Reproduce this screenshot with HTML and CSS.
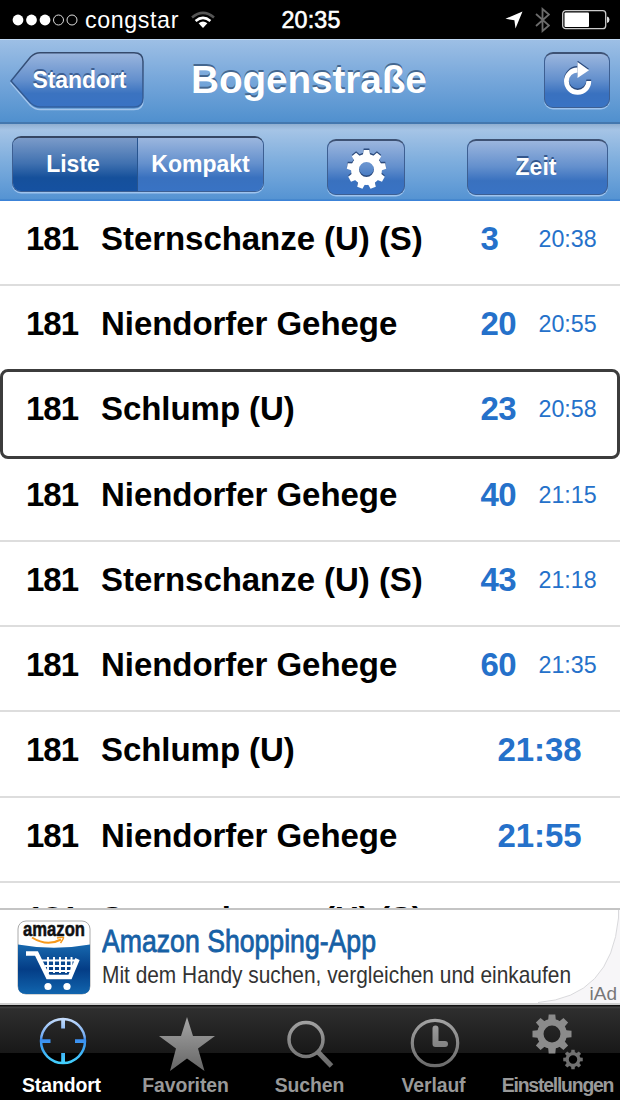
FILE: index.html
```
<!DOCTYPE html>
<html lang="de">
<head>
<meta charset="utf-8">
<title>Bogenstraße</title>
<link rel="stylesheet" href="styles.css">
</head>
<body>
<div class="phone">
  <header class="status">
    <div class="carrier">
      <svg width="68" height="14" viewBox="0 0 68 14"><g fill="#fff"><circle cx="6" cy="7" r="5.4"/><circle cx="19.5" cy="7" r="5.4"/><circle cx="33" cy="7" r="5.4"/></g><g fill="none" stroke="#ddd" stroke-width="1"><circle cx="46.5" cy="7" r="5"/><circle cx="60" cy="7" r="5"/></g></svg>
      <span class="carrier-name">congstar</span>
      <svg class="wifi" width="24" height="18" viewBox="0 0 24 18" fill="none" stroke-width="2.6"><path d="M1 6.4Q12-2.8 23 6.4" stroke="#555"/><path d="M4.6 10Q12 3.8 19.4 10" stroke="#fff"/><path d="M7.6 12.2Q12 9 16.4 12.2L12 17z" fill="#fff"/></svg>
    </div>
    <span class="clock">20:35</span>
    <div class="indicators">
      <svg width="18" height="18" viewBox="0 0 18 18"><path d="M17.5.5 10.5 17.5 9.4 9.2 .5 7.8z" fill="#fff"/></svg>
      <svg width="15" height="26" viewBox="0 0 15 26" fill="none" stroke="#6c6c6c" stroke-width="1.8"><path d="M1 7 14 18.500 7.500 24V2L14 7.500 1 19"/></svg>
      <svg width="48" height="20" viewBox="0 0 48 20"><rect x=".7" y=".7" width="43" height="18" rx="3" fill="none" stroke="#ccc" stroke-width="1.300"/><rect x="2.500" y="2.500" width="24.500" height="14.500" rx="1" fill="#fff"/><path d="M45 6.500q2.500.5 2.500 3.200T45 13z" fill="#ddd"/></svg>
    </div>
  </header>

  <nav class="navbar">
    <button class="back">
      <svg width="137" height="60" viewBox="0 0 137 60">
        <defs><linearGradient id="btn" x2="0" y2="1"><stop offset="0" stop-color="#9bb6de"/><stop offset=".5" stop-color="#6490cd"/><stop offset=".75" stop-color="#3b73c0"/><stop offset="1" stop-color="#3973c4"/></linearGradient>
        <linearGradient id="edge" x2="0" y2="1"><stop offset="0" stop-color="#354a6c"/><stop offset="1" stop-color="#315f9f"/></linearGradient></defs>
        <path d="M1 29.500 20.500 6Q25 1.500 30 1.500H124Q133 1.500 133 10.500V47Q133 56 124 56H30Q25 56 20.500 52z" transform="translate(0 1.500)" fill="none" stroke="#a3c5ec" stroke-width="1.500"/>
        <path d="M1 29 20.500 5Q25 .800 30 .800H124Q133 .800 133 9.500V46Q133 55 124 55H30Q25 55 20.500 51z" fill="url(#btn)" stroke="url(#edge)" stroke-width="1.500"/>
      </svg>
      <span class="back-label">Standort</span>
    </button>
    <h1 class="title">Bogenstraße</h1>
    <button class="btn refresh">
      <svg class="reload" width="32" height="36" viewBox="0 0 32 36"><path d="M26.800 20A11.200 11.200 0 1 1 15.500 9" fill="none" stroke="#2b4a7c" stroke-width="4.800" transform="translate(0 -1.500)"/><path d="M15.500 1 27 9.300 15.500 17z" fill="#2b4a7c" transform="translate(0 -1.500)"/><path d="M26.800 20A11.200 11.200 0 1 1 15.500 9" fill="none" stroke="#fff" stroke-width="4.800"/><path d="M15.500 1 27 9.300 15.500 17z" fill="#fff"/></svg>
    </button>
  </nav>

  <div class="toolbar">
    <div class="segmented"><button class="segment active">Liste</button><button class="segment">Kompakt</button></div>
    <button class="btn gear">
      <svg width="42" height="42" viewBox="-21.500 -22.500 42 42">
        <defs><path id="tooth" d="M-4-12-2.800-19.500H2.800L4-12z"/>
        <g id="cog"><circle r="11.500" fill="none" stroke="currentColor" stroke-width="8"/><g fill="currentColor"><use href="#tooth"/><use href="#tooth" transform="rotate(40)"/><use href="#tooth" transform="rotate(80)"/><use href="#tooth" transform="rotate(120)"/><use href="#tooth" transform="rotate(160)"/><use href="#tooth" transform="rotate(200)"/><use href="#tooth" transform="rotate(240)"/><use href="#tooth" transform="rotate(280)"/><use href="#tooth" transform="rotate(320)"/></g></g></defs>
        <use href="#cog" y="-1.500" color="#2b4a7c"/><use href="#cog" color="#fff"/>
      </svg>
    </button>
    <button class="btn time-btn">Zeit</button>
  </div>

  <main class="list">
    <div class="row"><span class="line">181</span><span class="dest">Sternschanze (U) (S)</span><span class="mins">3</span><span class="time">20:38</span></div>
    <div class="row"><span class="line">181</span><span class="dest">Niendorfer Gehege</span><span class="mins">20</span><span class="time">20:55</span></div>
    <div class="row selected"><span class="line">181</span><span class="dest">Schlump (U)</span><span class="mins">23</span><span class="time">20:58</span></div>
    <div class="row"><span class="line">181</span><span class="dest">Niendorfer Gehege</span><span class="mins">40</span><span class="time">21:15</span></div>
    <div class="row"><span class="line">181</span><span class="dest">Sternschanze (U) (S)</span><span class="mins">43</span><span class="time">21:18</span></div>
    <div class="row"><span class="line">181</span><span class="dest">Niendorfer Gehege</span><span class="mins">60</span><span class="time">21:35</span></div>
    <div class="row"><span class="line">181</span><span class="dest">Schlump (U)</span><span class="late">21:38</span></div>
    <div class="row"><span class="line">181</span><span class="dest">Niendorfer Gehege</span><span class="late">21:55</span></div>
    <div class="row partial"><span class="line">181</span><span class="dest">Sternschanze (U) (S)</span></div>
  </main>

  <aside class="ad">
    <svg class="app-icon" width="74" height="75" viewBox="0 0 74 75">
      <defs><linearGradient id="az" x2="0" y2="1"><stop offset="0" stop-color="#1768ae"/><stop offset=".5" stop-color="#043d86"/><stop offset="1" stop-color="#1165ae"/></linearGradient></defs>
      <rect x="1" y="1" width="72" height="73" rx="8" fill="#fff" stroke="#aaa"/>
      <path d="M1 24.500Q37 31 73 24.500V66Q73 74 65 74H9Q1 74 1 66z" fill="url(#az)"/>
      <text class="az-word" x="6" y="16" textLength="62" lengthAdjust="spacingAndGlyphs">amazon</text>
      <path d="M15 17.500Q30 27 44 19.500" fill="none" stroke="#f79a1c" stroke-width="2"/><path d="M40 18Q47 16.500 46.500 18T43.500 23" fill="none" stroke="#f79a1c" stroke-width="1.500"/>
      <path d="M9 33.500H19.500L31 57H53L60.500 39" fill="none" stroke="#fff" stroke-width="4.600"/>
      <path d="M25 40.500H58M28 46H56M30 51H54M31 37V53M37 37V53M43 37V53M49 37V53M54.500 37V50" stroke="#fff" stroke-width="1.900"/>
      <circle cx="31" cy="66.500" r="3.600" fill="#fff"/><circle cx="50" cy="66.500" r="3.600" fill="#fff"/>
    </svg>
    <svg class="ad-copy" width="474" height="80" viewBox="0 0 474 80">
      <text class="ad-title" x="0" y="39.500" textLength="274" lengthAdjust="spacingAndGlyphs">Amazon Shopping-App</text>
      <text class="ad-sub" x="0" y="71" textLength="469" lengthAdjust="spacingAndGlyphs">Mit dem Handy suchen, vergleichen und einkaufen</text>
    </svg>
    <div class="ad-corner"><svg width="90" height="93" viewBox="0 0 90 93"><path d="M88.500 0V8Q81 87 8 92.500V93H90V0z" fill="#f7f6f8"/><path d="M88.500 0V8Q81 87 8 92.500" fill="none" stroke="#d9d9dc"/></svg><span class="iad">iAd</span></div>
  </aside>

  <footer class="tabs">
    <svg width="0" height="0" class="defs"><defs>
      <linearGradient id="blue" gradientUnits="userSpaceOnUse" x1="0" y1="2" x2="0" y2="50"><stop offset="0" stop-color="#d9e8fc"/><stop offset=".48" stop-color="#6fa9f4"/><stop offset=".52" stop-color="#3b8cf0"/><stop offset="1" stop-color="#42cdfc"/></linearGradient>
      <linearGradient id="grey" gradientUnits="userSpaceOnUse" x1="0" y1="2" x2="0" y2="54"><stop offset="0" stop-color="#aaa"/><stop offset="1" stop-color="#6b6b6b"/></linearGradient>
    </defs></svg>
    <a class="tab current"><svg width="60" height="60" viewBox="0 0 60 60"><circle cx="31" cy="29" r="22" fill="none" stroke="url(#blue)" stroke-width="2.500"/><path fill="url(#blue)" d="M29.200 7h3.800v9.500h-3.800zM29.200 41h3.800v10h-3.800zM9 27.300h9.500V31H9zM43 27.300h10V31H43z"/></svg><span>Standort</span></a>
    <a class="tab"><svg width="60" height="60" viewBox="0 0 60 60"><path d="M31 5 37 24H59L42 36.500 48.500 59 31 46.500 14 59 20 36.500 3 24H25z" fill="url(#grey)"/></svg><span>Favoriten</span></a>
    <a class="tab"><svg width="60" height="60" viewBox="0 0 60 60" fill="none" stroke="url(#grey)"><circle cx="26" cy="27.500" r="17" stroke-width="3.500"/><path d="M37.500 39.500 51.500 54" stroke-width="5"/></svg><span>Suchen</span></a>
    <a class="tab"><svg width="60" height="60" viewBox="0 0 60 60" fill="none" stroke="url(#grey)"><circle cx="31" cy="31" r="22.700" stroke-width="3.200"/><path d="M31.500 16.500V32H41" stroke-width="6" stroke-linecap="round" stroke-linejoin="round"/></svg><span>Verlauf</span></a>
    <a class="tab settings"><svg width="60" height="60" viewBox="0 0 60 60">
      <defs><path id="t8" d="M-4-12-3.300-19.500H3.300L4-12z"/><g id="cog8"><circle r="11.700" fill="none" stroke="currentColor" stroke-width="6.500"/><g fill="currentColor"><use href="#t8"/><use href="#t8" transform="rotate(45)"/><use href="#t8" transform="rotate(90)"/><use href="#t8" transform="rotate(135)"/><use href="#t8" transform="rotate(180)"/><use href="#t8" transform="rotate(225)"/><use href="#t8" transform="rotate(270)"/><use href="#t8" transform="rotate(315)"/></g></g></defs>
      <use href="#cog8" transform="translate(24 22)" color="#8b8b8b"/><use href="#cog8" transform="translate(45 47.500) scale(.5)" color="#707070"/></svg><span>Einstellungen</span></a>
  </footer>
</div>
</body>
</html>
```
FILE: styles.css
```
* { box-sizing: border-box; }
body { margin: 0; background: #000; font-family: "Liberation Sans", Arial, sans-serif; }
button { border: 0; margin: 0; padding: 0; background: none; font: inherit; color: inherit; }
svg { display: block; flex: none; }
.phone { width: 620px; height: 1100px; display: flex; flex-direction: column; overflow: hidden; }

.status { height: 39px; flex: none; display: grid; grid-template-columns: 1fr auto 1fr; align-items: center; padding: 1px 10px 0 12px; background: #000; color: #fff; font-size: 23.25px; }
.carrier { display: flex; align-items: center; }
.carrier-name { margin-left: 5px; letter-spacing: .6px; }
.wifi { margin-left: 12px; }
.clock { -webkit-text-stroke: .6px #fff; letter-spacing: .2px; }
.indicators { display: flex; justify-content: flex-end; align-items: center; gap: 12px; }

.navbar { height: 85px; flex: none; display: flex; align-items: flex-start; padding: 12px 10px 0; background: linear-gradient(#9dbfe5, #75a6da 50%, #5090ce); border-top: 1px solid #c0d8f2; border-bottom: 2px solid #4377ae; color: #fff; font-weight: bold; }
.back { display: grid; width: 137px; height: 60px; font-size: 23px; text-align: left; }
.back svg, .back-label { grid-area: 1 / 1; }
.back-label { padding: 15px 0 0 22.500px; letter-spacing: -.1px; text-shadow: 0 -2px 0 #3d5f92; }
.title { margin: 6px 0 0 44px; width: 240px; font-size: 38.75px; line-height: 44px; letter-spacing: -.1px; text-shadow: 0 -2px 0 #44678f; white-space: nowrap; }
.btn { display: flex; align-items: center; justify-content: center; height: 56px; border: 1.500px solid #3d5f92; border-top: 2px solid #3e5274; border-radius: 9px; background: linear-gradient(#9bb6de, #6490cd 48%, #3971bf 75%, #3973c4); box-shadow: 0 1.500px 0 #9fc4ee; color: #fff; font-weight: bold; font-size: 23px; text-shadow: 0 -2px 0 #34578d; }
.refresh { width: 66px; margin-left: auto; }
.reload { margin: -3px 0 0 2px; }

.toolbar { height: 77px; flex: none; display: flex; align-items: flex-start; padding: 12px 12px 0; background: linear-gradient(#8faed0, #a5c4e6 6px, #7daddd 50%, #5694d3 98%, #3f82cb); border-bottom: 1px solid #3c83d8; }
.segmented { display: flex; width: 252px; height: 56px; border: 1.500px solid #3d5f92; border-top: 2px solid #354663; border-radius: 9px; overflow: hidden; box-shadow: 0 1.500px 0 #9fc4ee; color: #fff; font-weight: bold; font-size: 23px; text-shadow: 0 -2px 0 #34578d; }
.segment { flex: 1; padding-bottom: 1px; background: linear-gradient(#9bb6de, #6490cd 48%, #3971bf 75%, #3973c4); }
.active { flex: none; width: 125px; padding-right: 4px; border-right: 1px solid #27548f; background: linear-gradient(#7b9bc9, #4071b0 48%, #15509b 75%, #1551a1); }
.gear { width: 78px; margin: 3px 0 0 63px; }
.time-btn { width: 141px; margin: 3px 0 0 auto; padding-right: 3px; }

.list { flex: 1; min-height: 0; overflow: hidden; background: #fff; }
.row { height: 85.25px; display: flex; align-items: baseline; padding: 19px 0 0 26px; border-bottom: 2px solid #ddd; font-size: 33px; font-weight: bold; line-height: 38px; }
.selected { position: relative; height: 90px; margin: -3px 0 -2px; padding: 18.250px 0 0 23px; border: 3px solid #3c3c3c; border-radius: 8px; background: #fff; }
.row:has(+ .selected) { border-color: #fff; }
.partial { padding-top: 17px; }
.line { width: 75px; letter-spacing: -1px; }
.dest { width: 379.500px; letter-spacing: -.05px; white-space: nowrap; }
.mins { width: 58px; color: #2571ca; letter-spacing: -.5px; }
.time { position: relative; top: -3px; color: #2571ca; font-size: 23.25px; font-weight: normal; }
.late { margin-left: 17px; color: #2571ca; letter-spacing: -.1px; }

.ad { height: 97px; flex: none; display: flex; border-top: 2px solid #c4c4c4; border-bottom: 2px solid #cfcfcf; background: #fff; padding-left: 17px; }
.app-icon { margin-top: 10px; }
.ad-copy { margin: 2px 0 0 11px; }
.az-word { font-size: 19.500px; font-weight: bold; fill: #111; stroke: #111; stroke-width: .5px; }
.ad-title { font-size: 30.500px; fill: #1660a5; stroke: #1660a5; stroke-width: .8px; }
.ad-sub { font-size: 24px; fill: #333; }
.ad-corner { position: relative; margin-left: -46px; }
.iad { position: absolute; right: 3px; bottom: -2px; font-size: 19px; line-height: 22px; color: #777; }

.tabs { height: 95px; flex: none; display: flex; padding: 7px 0 0 1px; background: linear-gradient(#111 0, #111 1px, #444 2px, #2e2e2e 4px, #181818 48px, #000 48px); color: #999; font-size: 19.400px; font-weight: bold; }
.defs { position: absolute; }
.tab { flex: none; width: 124px; display: flex; flex-direction: column; align-items: center; padding-right: 2px; }
.tab span { margin: 1px 1px 0 0; line-height: 24px; letter-spacing: -.1px; }
.current { color: #fff; }
.tab.settings span { letter-spacing: -1.200px; }
```
